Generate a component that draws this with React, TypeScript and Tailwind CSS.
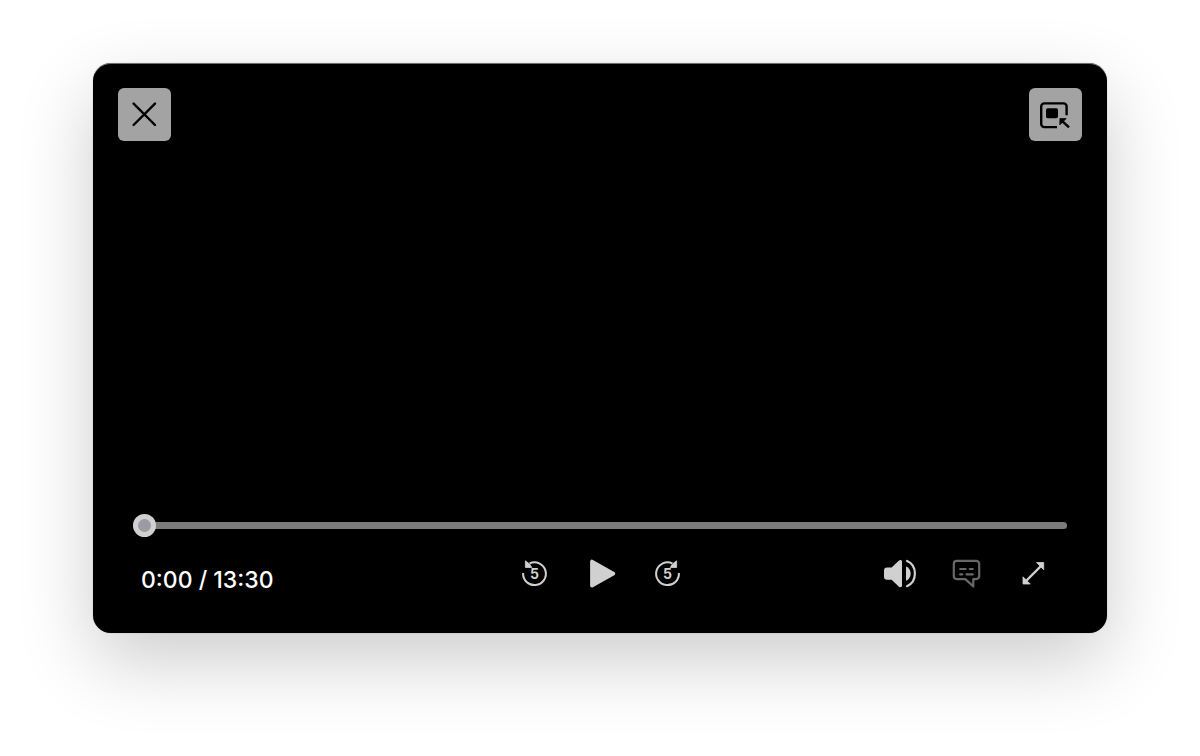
import { useState } from "react";
import type { ReactNode } from "react";

const DURATION = 810;

function formatTime(seconds: number) {
  return `${Math.floor(seconds / 60)}:${String(seconds % 60).padStart(2, "0")}`;
}

function OverlayButton({ label, children }: { label: string; children: ReactNode }) {
  return (
    <button type="button" aria-label={label} className="size-[53px] rounded-[6px] bg-[#a3a3a3] text-black">
      {children}
    </button>
  );
}

function ControlButton({ label, onClick, disabled, children }: {
  label: string;
  onClick?: () => void;
  disabled?: boolean;
  children: ReactNode;
}) {
  return (
    <button
      type="button"
      aria-label={label}
      onClick={onClick}
      disabled={disabled}
      className="size-8 shrink-0 text-[#d0d0d0] disabled:text-[#686868]"
    >
      {children}
    </button>
  );
}

const iconClass = "block size-full overflow-visible";

function CloseIcon() {
  return (
    <svg viewBox="0 0 53 53" className={iconClass} fill="none" stroke="currentColor" strokeWidth="2.4" strokeLinecap="round">
      <path d="M15.6 15.6 37 37M37 15.6 15.6 37" />
    </svg>
  );
}

function ExitPipIcon() {
  return (
    <svg viewBox="0 0 53 53" className={iconClass} fill="none" stroke="currentColor" strokeWidth="2.4">
      <path d="M37.6 27.2V18.4a3 3 0 0 0-3-3H15.2a3 3 0 0 0-3 3v17.700a3 3 0 0 0 3 3H28" />
      <rect x="17" y="20.200" width="12" height="10" rx="1.600" fill="currentColor" stroke="none" />
      <path d="M33 32.800 40 39.400" strokeWidth="2.500" />
      <path d="M30.900 30.600h6.200l-6.200 6.200z" fill="currentColor" strokeWidth="0.800" strokeLinejoin="round" />
    </svg>
  );
}

function BackIcon() {
  return (
    <svg viewBox="0 0 32 32" className={iconClass}>
      <path d="M6.100 16A11.400 11.400 0 1 0 12.600 6.400" fill="none" stroke="currentColor" strokeWidth="2" />
      <path d="M8.400 3.800v6.700h6.400L12.600 7z" fill="currentColor" stroke="currentColor" strokeWidth="0.800" strokeLinejoin="round" />
      <text x="17.500" y="21.800" textAnchor="middle" className="font-['Inter',sans-serif] text-[14px] font-bold" fill="currentColor">5</text>
    </svg>
  );
}

function ForwardIcon() {
  return (
    <svg viewBox="0 0 32 32" className={iconClass}>
      <path d="M27.900 16A11.400 11.400 0 1 1 21.400 6.400" fill="none" stroke="currentColor" strokeWidth="2" />
      <path d="M25.600 3.800v6.700h-6.400L21.400 7z" fill="currentColor" stroke="currentColor" strokeWidth="0.800" strokeLinejoin="round" />
      <text x="16.500" y="21.800" textAnchor="middle" className="font-['Inter',sans-serif] text-[14px] font-bold" fill="currentColor">5</text>
    </svg>
  );
}

function PlayIcon() {
  return (
    <svg viewBox="0 0 32 32" className={iconClass}>
      <path d="M8 4.600v24L29.300 16.600z" fill="currentColor" stroke="currentColor" strokeWidth="3.800" strokeLinejoin="round" />
    </svg>
  );
}

function PauseIcon() {
  return (
    <svg viewBox="0 0 32 32" className={iconClass} fill="currentColor">
      <rect x="6" y="3" width="7" height="27" rx="1.500" />
      <rect x="19" y="3" width="7" height="27" rx="1.500" />
    </svg>
  );
}

function VolumeIcon() {
  return (
    <svg viewBox="0 0 32 32" className={iconClass} fill="currentColor">
      <path d="M4 10.400H8.600L16 3.500C17.300 2.400 19 2.900 19 4.600v24c0 1.700-1.700 2.200-3 1.100L8.600 22.800H4a3 3 0 0 1-3-3v-6.400a3 3 0 0 1 3-3z" />
      <path d="M23 9.400c2.900 1 4.700 3.800 4.700 7.200s-1.800 6.200-4.700 7.200z" />
      <path d="M24 4c4.900 2 7.900 6.800 7.900 12.600S28.900 27.200 24 29.200" fill="none" stroke="currentColor" strokeWidth="2.200" strokeLinecap="round" />
    </svg>
  );
}

function CaptionsIcon() {
  return (
    <svg viewBox="0 0 32 32" className={iconClass} fill="none" stroke="currentColor" strokeWidth="2.200" strokeLinejoin="round">
      <path d="M6.800 3.800h19.400a3 3 0 0 1 3 3v12.300a3 3 0 0 1-3 3H23.300v7.300L15.300 22.100H6.800a3 3 0 0 1-3-3V6.800a3 3 0 0 1 3-3z" />
      <path d="M10.200 12h5.500M19.800 12h3M10.200 17.400h2M16.500 17.400h6.300" strokeLinecap="round" />
    </svg>
  );
}

function ExpandIcon() {
  return (
    <svg viewBox="0 0 32 32" className={iconClass} fill="currentColor">
      <path d="M8.500 24.500 24.500 8.500" stroke="currentColor" strokeWidth="2.400" />
      <path d="M19.500 5.500h7.200v7.200zM6 19.800V27h7.200z" stroke="currentColor" strokeWidth="0.800" strokeLinejoin="round" />
    </svg>
  );
}

export default function App() {
  const [time, setTime] = useState(0);
  const [playing, setPlaying] = useState(false);

  return (
    <main className="min-h-screen bg-white px-[93px] pt-[63px] pb-[122px] font-['Inter',sans-serif]">
      <section
        aria-label="Video player"
        className="flex aspect-video flex-col justify-between rounded-[18px] border-t border-[#6e6e6e] bg-black shadow-[0_0_1px_rgba(0,0,0,0.4),0_28px_76px_rgba(0,0,0,0.2)]"
      >
        <div className="flex justify-between px-[25px] pt-6">
          <OverlayButton label="Close"><CloseIcon /></OverlayButton>
          <OverlayButton label="Exit picture in picture"><ExitPipIcon /></OverlayButton>
        </div>

        <div className="flex flex-col gap-5 px-10 pb-[37px]">
          <input
            type="range"
            aria-label="Seek"
            min={0}
            max={DURATION}
            value={time}
            onChange={(e) => setTime(Number(e.target.value))}
            className="block h-[23px] w-full cursor-pointer appearance-none bg-transparent [&::-webkit-slider-runnable-track]:h-[7px] [&::-webkit-slider-runnable-track]:rounded-full [&::-webkit-slider-runnable-track]:bg-[#7b7b7b] [&::-webkit-slider-thumb]:-mt-2 [&::-webkit-slider-thumb]:size-[23px] [&::-webkit-slider-thumb]:appearance-none [&::-webkit-slider-thumb]:rounded-full [&::-webkit-slider-thumb]:border-[5px] [&::-webkit-slider-thumb]:border-[#d0d0d0] [&::-webkit-slider-thumb]:bg-[#9c9ba3]"
          />
          <div className="grid grid-cols-3 items-start">
            <p className="pt-2 pl-2 text-[23px] leading-[31px] font-medium whitespace-nowrap text-white">
              {formatTime(time)} / {formatTime(DURATION)}
            </p>
            <div className="flex justify-center gap-[35px]">
              <ControlButton label="Back 5 seconds" onClick={() => setTime(Math.max(0, time - 5))}><BackIcon /></ControlButton>
              <ControlButton label={playing ? "Pause" : "Play"} onClick={() => setPlaying(!playing)}>
                {playing ? <PauseIcon /> : <PlayIcon />}
              </ControlButton>
              <ControlButton label="Forward 5 seconds" onClick={() => setTime(Math.min(DURATION, time + 5))}><ForwardIcon /></ControlButton>
            </div>
            <div className="flex justify-end gap-[35px] pr-[18px]">
              <ControlButton label="Volume"><VolumeIcon /></ControlButton>
              <ControlButton label="Captions" disabled><CaptionsIcon /></ControlButton>
              <ControlButton label="Full screen"><ExpandIcon /></ControlButton>
            </div>
          </div>
        </div>
      </section>
    </main>
  );
}
